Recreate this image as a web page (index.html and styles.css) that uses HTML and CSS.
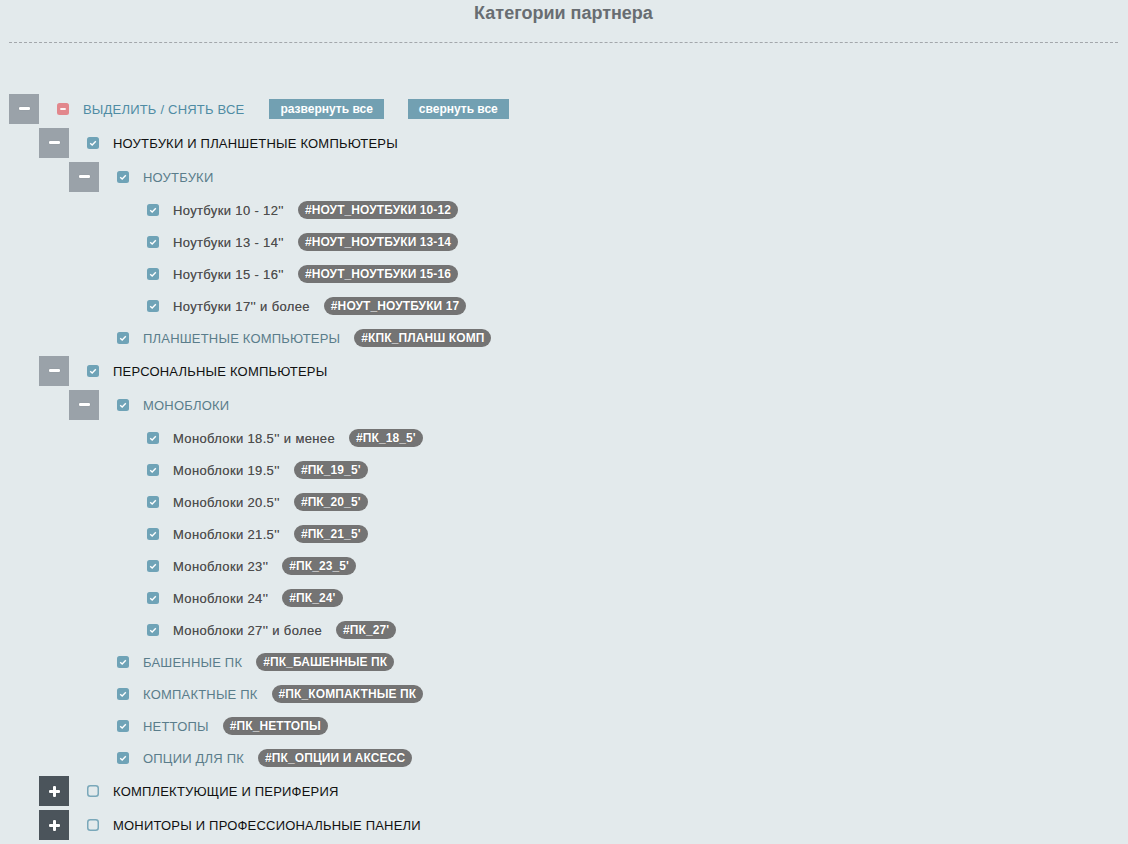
FILE: index.html
```html
<!DOCTYPE html>
<html lang="ru">
<head>
<meta charset="utf-8">
<title>Категории партнера</title>
<link rel="stylesheet" href="styles.css">
</head>
<body>
<div class="page">
  <h1 class="title">Категории партнера</h1>
  <div class="divider"></div>

  <ul class="tree">
    <li>
      <div class="row tall">
        <span class="toggle minus"></span>
        <svg class="cb" viewBox="0 0 12 12"><rect width="12" height="12" rx="2.5" fill="#e2878c"/><path d="M3.3 6h5.4" stroke="#fff" stroke-width="1.8"/></svg>
        <span class="label root">ВЫДЕЛИТЬ / СНЯТЬ ВСЕ</span>
        <button class="btn expand">развернуть все</button>
        <button class="btn collapse">свернуть все</button>
      </div>
      <ul class="sub">
        <li>
          <div class="row tall">
            <span class="toggle minus"></span>
            <svg class="cb" viewBox="0 0 12 12"><rect width="12" height="12" rx="2.5" fill="#6fa3b7"/><path d="M3.2 6.2l2 1.8 3.6-3.7" fill="none" stroke="#fff" stroke-width="1.4"/></svg>
            <span class="label l1">НОУТБУКИ И ПЛАНШЕТНЫЕ КОМПЬЮТЕРЫ</span>
          </div>
          <ul class="sub">
            <li>
              <div class="row tall">
                <span class="toggle minus"></span>
                <svg class="cb" viewBox="0 0 12 12"><rect width="12" height="12" rx="2.5" fill="#6fa3b7"/><path d="M3.2 6.2l2 1.8 3.6-3.7" fill="none" stroke="#fff" stroke-width="1.4"/></svg>
                <span class="label l2">НОУТБУКИ</span>
              </div>
              <ul class="sub">
                <li><div class="row"><span class="slot"></span><svg class="cb" viewBox="0 0 12 12"><rect width="12" height="12" rx="2.5" fill="#6fa3b7"/><path d="M3.2 6.2l2 1.8 3.6-3.7" fill="none" stroke="#fff" stroke-width="1.4"/></svg><span class="label leaf">Ноутбуки 10 - 12''</span><span class="tag">#НОУТ_НОУТБУКИ 10-12</span></div></li>
                <li><div class="row"><span class="slot"></span><svg class="cb" viewBox="0 0 12 12"><rect width="12" height="12" rx="2.5" fill="#6fa3b7"/><path d="M3.2 6.2l2 1.8 3.6-3.7" fill="none" stroke="#fff" stroke-width="1.4"/></svg><span class="label leaf">Ноутбуки 13 - 14''</span><span class="tag">#НОУТ_НОУТБУКИ 13-14</span></div></li>
                <li><div class="row"><span class="slot"></span><svg class="cb" viewBox="0 0 12 12"><rect width="12" height="12" rx="2.5" fill="#6fa3b7"/><path d="M3.2 6.2l2 1.8 3.6-3.7" fill="none" stroke="#fff" stroke-width="1.4"/></svg><span class="label leaf">Ноутбуки 15 - 16''</span><span class="tag">#НОУТ_НОУТБУКИ 15-16</span></div></li>
                <li><div class="row"><span class="slot"></span><svg class="cb" viewBox="0 0 12 12"><rect width="12" height="12" rx="2.5" fill="#6fa3b7"/><path d="M3.2 6.2l2 1.8 3.6-3.7" fill="none" stroke="#fff" stroke-width="1.4"/></svg><span class="label leaf">Ноутбуки 17'' и более</span><span class="tag">#НОУТ_НОУТБУКИ 17</span></div></li>
              </ul>
            </li>
            <li><div class="row"><span class="slot"></span><svg class="cb" viewBox="0 0 12 12"><rect width="12" height="12" rx="2.5" fill="#6fa3b7"/><path d="M3.2 6.2l2 1.8 3.6-3.7" fill="none" stroke="#fff" stroke-width="1.4"/></svg><span class="label l2">ПЛАНШЕТНЫЕ КОМПЬЮТЕРЫ</span><span class="tag">#КПК_ПЛАНШ КОМП</span></div></li>
          </ul>
        </li>
        <li>
          <div class="row tall">
            <span class="toggle minus"></span>
            <svg class="cb" viewBox="0 0 12 12"><rect width="12" height="12" rx="2.5" fill="#6fa3b7"/><path d="M3.2 6.2l2 1.8 3.6-3.7" fill="none" stroke="#fff" stroke-width="1.4"/></svg>
            <span class="label l1">ПЕРСОНАЛЬНЫЕ КОМПЬЮТЕРЫ</span>
          </div>
          <ul class="sub">
            <li>
              <div class="row tall">
                <span class="toggle minus"></span>
                <svg class="cb" viewBox="0 0 12 12"><rect width="12" height="12" rx="2.5" fill="#6fa3b7"/><path d="M3.2 6.2l2 1.8 3.6-3.7" fill="none" stroke="#fff" stroke-width="1.4"/></svg>
                <span class="label l2">МОНОБЛОКИ</span>
              </div>
              <ul class="sub">
                <li><div class="row"><span class="slot"></span><svg class="cb" viewBox="0 0 12 12"><rect width="12" height="12" rx="2.5" fill="#6fa3b7"/><path d="M3.2 6.2l2 1.8 3.6-3.7" fill="none" stroke="#fff" stroke-width="1.4"/></svg><span class="label leaf">Моноблоки 18.5'' и менее</span><span class="tag">#ПК_18_5'</span></div></li>
                <li><div class="row"><span class="slot"></span><svg class="cb" viewBox="0 0 12 12"><rect width="12" height="12" rx="2.5" fill="#6fa3b7"/><path d="M3.2 6.2l2 1.8 3.6-3.7" fill="none" stroke="#fff" stroke-width="1.4"/></svg><span class="label leaf">Моноблоки 19.5''</span><span class="tag">#ПК_19_5'</span></div></li>
                <li><div class="row"><span class="slot"></span><svg class="cb" viewBox="0 0 12 12"><rect width="12" height="12" rx="2.5" fill="#6fa3b7"/><path d="M3.2 6.2l2 1.8 3.6-3.7" fill="none" stroke="#fff" stroke-width="1.4"/></svg><span class="label leaf">Моноблоки 20.5''</span><span class="tag">#ПК_20_5'</span></div></li>
                <li><div class="row"><span class="slot"></span><svg class="cb" viewBox="0 0 12 12"><rect width="12" height="12" rx="2.5" fill="#6fa3b7"/><path d="M3.2 6.2l2 1.8 3.6-3.7" fill="none" stroke="#fff" stroke-width="1.4"/></svg><span class="label leaf">Моноблоки 21.5''</span><span class="tag">#ПК_21_5'</span></div></li>
                <li><div class="row"><span class="slot"></span><svg class="cb" viewBox="0 0 12 12"><rect width="12" height="12" rx="2.5" fill="#6fa3b7"/><path d="M3.2 6.2l2 1.8 3.6-3.7" fill="none" stroke="#fff" stroke-width="1.4"/></svg><span class="label leaf">Моноблоки 23''</span><span class="tag">#ПК_23_5'</span></div></li>
                <li><div class="row"><span class="slot"></span><svg class="cb" viewBox="0 0 12 12"><rect width="12" height="12" rx="2.5" fill="#6fa3b7"/><path d="M3.2 6.2l2 1.8 3.6-3.7" fill="none" stroke="#fff" stroke-width="1.4"/></svg><span class="label leaf">Моноблоки 24''</span><span class="tag">#ПК_24'</span></div></li>
                <li><div class="row"><span class="slot"></span><svg class="cb" viewBox="0 0 12 12"><rect width="12" height="12" rx="2.5" fill="#6fa3b7"/><path d="M3.2 6.2l2 1.8 3.6-3.7" fill="none" stroke="#fff" stroke-width="1.4"/></svg><span class="label leaf">Моноблоки 27'' и более</span><span class="tag">#ПК_27'</span></div></li>
              </ul>
            </li>
            <li><div class="row"><span class="slot"></span><svg class="cb" viewBox="0 0 12 12"><rect width="12" height="12" rx="2.5" fill="#6fa3b7"/><path d="M3.2 6.2l2 1.8 3.6-3.7" fill="none" stroke="#fff" stroke-width="1.4"/></svg><span class="label l2">БАШЕННЫЕ ПК</span><span class="tag">#ПК_БАШЕННЫЕ ПК</span></div></li>
            <li><div class="row"><span class="slot"></span><svg class="cb" viewBox="0 0 12 12"><rect width="12" height="12" rx="2.5" fill="#6fa3b7"/><path d="M3.2 6.2l2 1.8 3.6-3.7" fill="none" stroke="#fff" stroke-width="1.4"/></svg><span class="label l2">КОМПАКТНЫЕ ПК</span><span class="tag">#ПК_КОМПАКТНЫЕ ПК</span></div></li>
            <li><div class="row"><span class="slot"></span><svg class="cb" viewBox="0 0 12 12"><rect width="12" height="12" rx="2.5" fill="#6fa3b7"/><path d="M3.2 6.2l2 1.8 3.6-3.7" fill="none" stroke="#fff" stroke-width="1.4"/></svg><span class="label l2">НЕТТОПЫ</span><span class="tag">#ПК_НЕТТОПЫ</span></div></li>
            <li><div class="row"><span class="slot"></span><svg class="cb" viewBox="0 0 12 12"><rect width="12" height="12" rx="2.5" fill="#6fa3b7"/><path d="M3.2 6.2l2 1.8 3.6-3.7" fill="none" stroke="#fff" stroke-width="1.4"/></svg><span class="label l2">ОПЦИИ ДЛЯ ПК</span><span class="tag">#ПК_ОПЦИИ И АКСЕСС</span></div></li>
          </ul>
        </li>
        <li>
          <div class="row tall">
            <span class="toggle plus"></span>
            <svg class="cb" viewBox="0 0 12 12"><rect x="0.75" y="0.75" width="10.5" height="10.5" rx="2.5" fill="none" stroke="#7aa8ba" stroke-width="1.5"/></svg>
            <span class="label l1">КОМПЛЕКТУЮЩИЕ И ПЕРИФЕРИЯ</span>
          </div>
        </li>
        <li>
          <div class="row tall">
            <span class="toggle plus"></span>
            <svg class="cb" viewBox="0 0 12 12"><rect x="0.75" y="0.75" width="10.5" height="10.5" rx="2.5" fill="none" stroke="#7aa8ba" stroke-width="1.5"/></svg>
            <span class="label l1">МОНИТОРЫ И ПРОФЕССИОНАЛЬНЫЕ ПАНЕЛИ</span>
          </div>
        </li>
      </ul>
    </li>
  </ul>
</div>
</body>
</html>
```

FILE: styles.css
```css
html, body {
  margin: 0;
  padding: 0;
  background: #e3eaec;
}

body {
  font-family: "Liberation Sans", Arial, sans-serif;
  font-size: 13px;
  color: #333;
}

.page {
  padding: 0 10px 0 9px;
}

.title {
  margin: 0;
  padding-top: 2px;
  font-size: 18px;
  line-height: 22px;
  font-weight: bold;
  color: #686d72;
  text-align: center;
}

.divider {
  margin-top: 18px;
  border-top: 1px dashed #a3a7ab;
}

.tree,
.sub {
  list-style: none;
  margin: 0;
  padding: 0;
}

.tree {
  padding-top: 49px;
}

.sub {
  padding-left: 30px;
}

.row {
  display: flex;
  align-items: center;
  height: 32px;
  white-space: nowrap;
}

.row.tall {
  height: 34px;
}

.toggle,
.slot {
  flex: none;
  width: 30px;
  height: 30px;
}

.toggle {
  position: relative;
}

.toggle.minus {
  background: #9aa2a9;
}

.toggle.plus {
  background: #4b545b;
}

.toggle::before,
.toggle::after {
  content: "";
  position: absolute;
  left: 10px;
  top: 13px;
  width: 11px;
  height: 3px;
  background: #fff;
  border-radius: 1px;
  box-shadow: 0 0 1px rgba(0, 0, 0, 0.25);
}

.toggle.minus::after {
  display: none;
}

.toggle.plus::before {
  left: 10px;
  top: 13.5px;
  width: 11px;
  height: 3px;
}

.toggle.plus::after {
  left: 14px;
  top: 9.5px;
  width: 3px;
  height: 11px;
}

.cb {
  flex: none;
  width: 12px;
  height: 12px;
  margin-left: 18px;
}

.label {
  margin-left: 14px;
  font-size: 13px;
  letter-spacing: 0.2px;
}

.label.root {
  color: #4f8ca4;
}

.label.l1 {
  color: #111;
}

.label.l2 {
  color: #5a7d8b;
}

.label.leaf {
  color: #4e4e4e;
  letter-spacing: 0.35px;
  text-shadow: 0 0 0.3px rgba(60, 60, 60, 0.6);
}

.btn {
  border: 0;
  height: 20px;
  padding: 0 11px;
  background: #72a0b2;
  color: #fff;
  font-family: "Liberation Sans", Arial, sans-serif;
  font-size: 12px;
  font-weight: bold;
  cursor: pointer;
}

.btn.expand {
  margin-left: 25px;
}

.btn.collapse {
  margin-left: 24px;
}

.tag {
  margin-left: 14px;
  height: 18px;
  line-height: 18px;
  padding: 0 7px;
  border-radius: 9px;
  background: #747474;
  color: #fff;
  font-size: 12px;
  font-weight: bold;
  letter-spacing: 0.1px;
  text-shadow: 0 0 1px rgba(0, 0, 0, 0.3);
}
```
